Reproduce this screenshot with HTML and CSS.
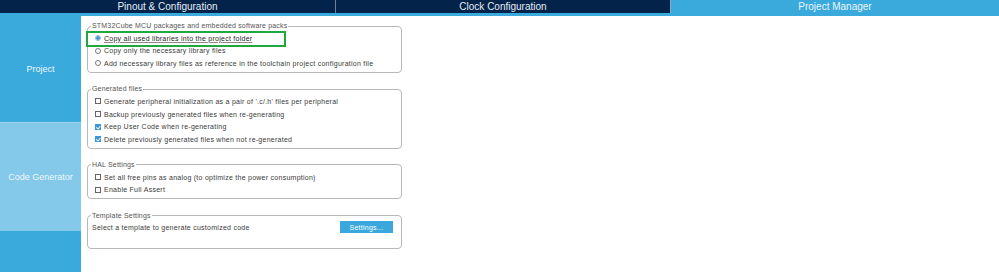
FILE: index.html
```html
<!DOCTYPE html>
<html lang="en">
  <head>
    <meta charset="UTF-8" />
    <meta name="viewport" content="width=device-width, initial-scale=1.0" />
    <title>Project Manager</title>
    <link rel="stylesheet" href="styles.css">
  </head>
  <body>
    <header class="tabs">
      <div class="tab tab-pinout">Pinout &amp; Configuration</div>
      <div class="tab tab-clock">Clock Configuration</div>
      <div class="tab tab-active">Project Manager</div>
    </header>

    <div class="main">
      <nav class="sidebar">
        <div class="side-item side-project">Project</div>
        <div class="side-item side-active">Code Generator</div>
      </nav>

      <div class="content">
        <fieldset class="group">
          <legend>STM32Cube MCU packages and embedded software packs</legend>
          <div class="opt">
            <span class="radio radio-on"></span>
            <span class="label label-focus">Copy all used libraries into the project folder</span>
            <span class="highlight"></span>
          </div>
          <div class="opt">
            <span class="radio"></span>
            <span class="label">Copy only the necessary library files</span>
          </div>
          <div class="opt">
            <span class="radio"></span>
            <span class="label">Add necessary library files as reference in the toolchain project configuration file</span>
          </div>
        </fieldset>

        <fieldset class="group">
          <legend>Generated files</legend>
          <div class="opt">
            <span class="check"></span>
            <span class="label">Generate peripheral initialization as a pair of '.c/.h' files per peripheral</span>
          </div>
          <div class="opt">
            <span class="check"></span>
            <span class="label">Backup previously generated files when re-generating</span>
          </div>
          <div class="opt">
            <span class="check check-on"></span>
            <span class="label">Keep User Code when re-generating</span>
          </div>
          <div class="opt">
            <span class="check check-on"></span>
            <span class="label">Delete previously generated files when not re-generated</span>
          </div>
        </fieldset>

        <fieldset class="group">
          <legend>HAL Settings</legend>
          <div class="opt">
            <span class="check"></span>
            <span class="label">Set all free pins as analog (to optimize the power consumption)</span>
          </div>
          <div class="opt">
            <span class="check"></span>
            <span class="label">Enable Full Assert</span>
          </div>
        </fieldset>

        <fieldset class="group group-template">
          <legend>Template Settings</legend>
          <div class="template-row">
            <span class="label">Select a template to generate customized code</span>
            <button type="button" class="btn">Settings...</button>
          </div>
        </fieldset>
      </div>
    </div>
  </body>
</html>
```

FILE: styles.css
```css
* {
  box-sizing: border-box;
}

body {
  margin: 0;
  padding: 0;
  background: #fff;
  font-family: "Liberation Sans", Arial, sans-serif;
  height: 272px;
  overflow: hidden;
}

/* Top tabs */
.tabs {
  display: flex;
  height: 16px;
  background: #03234b;
  border-bottom: 3px solid #3aa9dc;
}

.tab {
  display: flex;
  justify-content: center;
  align-items: center;
  color: #e6ecf3;
  font-size: 10px;
  line-height: 13px;
}

.tab-pinout {
  width: 336px;
  border-right: 1px solid #6f819b;
}

.tab-clock {
  width: 335px;
  border-right: 1px solid #8ea4bf;
}

.tab-active {
  flex: 1;
  background: #3aa9dc;
  color: #eaf6fc;
}

/* Layout */
.main {
  display: flex;
  height: 256px;
}

.sidebar {
  width: 81px;
  background: #3aa9dc;
  display: flex;
  flex-direction: column;
}

.side-item {
  display: flex;
  justify-content: center;
  align-items: center;
  color: #eef7fc;
  font-size: 9px;
}

.side-project {
  height: 106px;
}

.side-active {
  height: 109px;
  background: #84c8ea;
  border-top: 1px solid #9ad3ef;
}

.content {
  padding: 5px 0 0 6px;
}

/* Groups */
.group {
  width: 315px;
  margin: 0 0 11.4px;
  padding: 1px 0 2px 7px;
  border: 1px solid #b7b7b7;
  border-radius: 4px;
  min-inline-size: 0;
}

.group legend {
  font-size: 7px;
  line-height: 10px;
  letter-spacing: 0.18px;
  padding: 0 1px;
  margin-left: -4px;
  color: #555;
}

.group-template {
  padding-top: 0;
  padding-bottom: 14px;
}

.opt {
  position: relative;
  display: flex;
  align-items: center;
  height: 12.6px;
}

.label {
  font-size: 7px;
  letter-spacing: 0.26px;
  color: #3a3a3a;
  white-space: nowrap;
}

.label-focus {
  color: #222;
  text-decoration: underline;
  text-decoration-color: #8a8a8a;
  text-underline-offset: 1px;
}

.radio {
  width: 6px;
  height: 6px;
  margin-right: 3px;
  border: 1px solid #777;
  border-radius: 50%;
  background: #fff;
}

.radio-on {
  border-color: #8fb6d6;
  background: radial-gradient(circle, #3b97d6 0 1.5px, #cfe3f2 2px);
}

.check {
  position: relative;
  width: 6px;
  height: 6px;
  margin-right: 3px;
  border: 1px solid #666;
  background: #fff;
}

.check-on {
  border-color: #3b97d6;
  background: #3b97d6;
}

.check-on::after {
  content: "";
  position: absolute;
  left: 1px;
  top: 0;
  width: 1.5px;
  height: 2.5px;
  border: solid #fff;
  border-width: 0 1px 1px 0;
  transform: rotate(40deg);
}

/* Annotation box around the selected option */
.highlight {
  position: absolute;
  left: -9px;
  top: -1px;
  width: 200px;
  height: 16px;
  border: 2px solid #1fa83d;
}

.template-row {
  display: flex;
  align-items: center;
  height: 13px;
  margin-left: -3px;
}

.btn {
  margin-left: auto;
  margin-right: 8px;
  width: 53px;
  height: 12px;
  padding: 0;
  border: none;
  background: #3aa8dc;
  color: #fff;
  font-family: "Liberation Sans", Arial, sans-serif;
  font-size: 7px;
  letter-spacing: 0.26px;
}
```
